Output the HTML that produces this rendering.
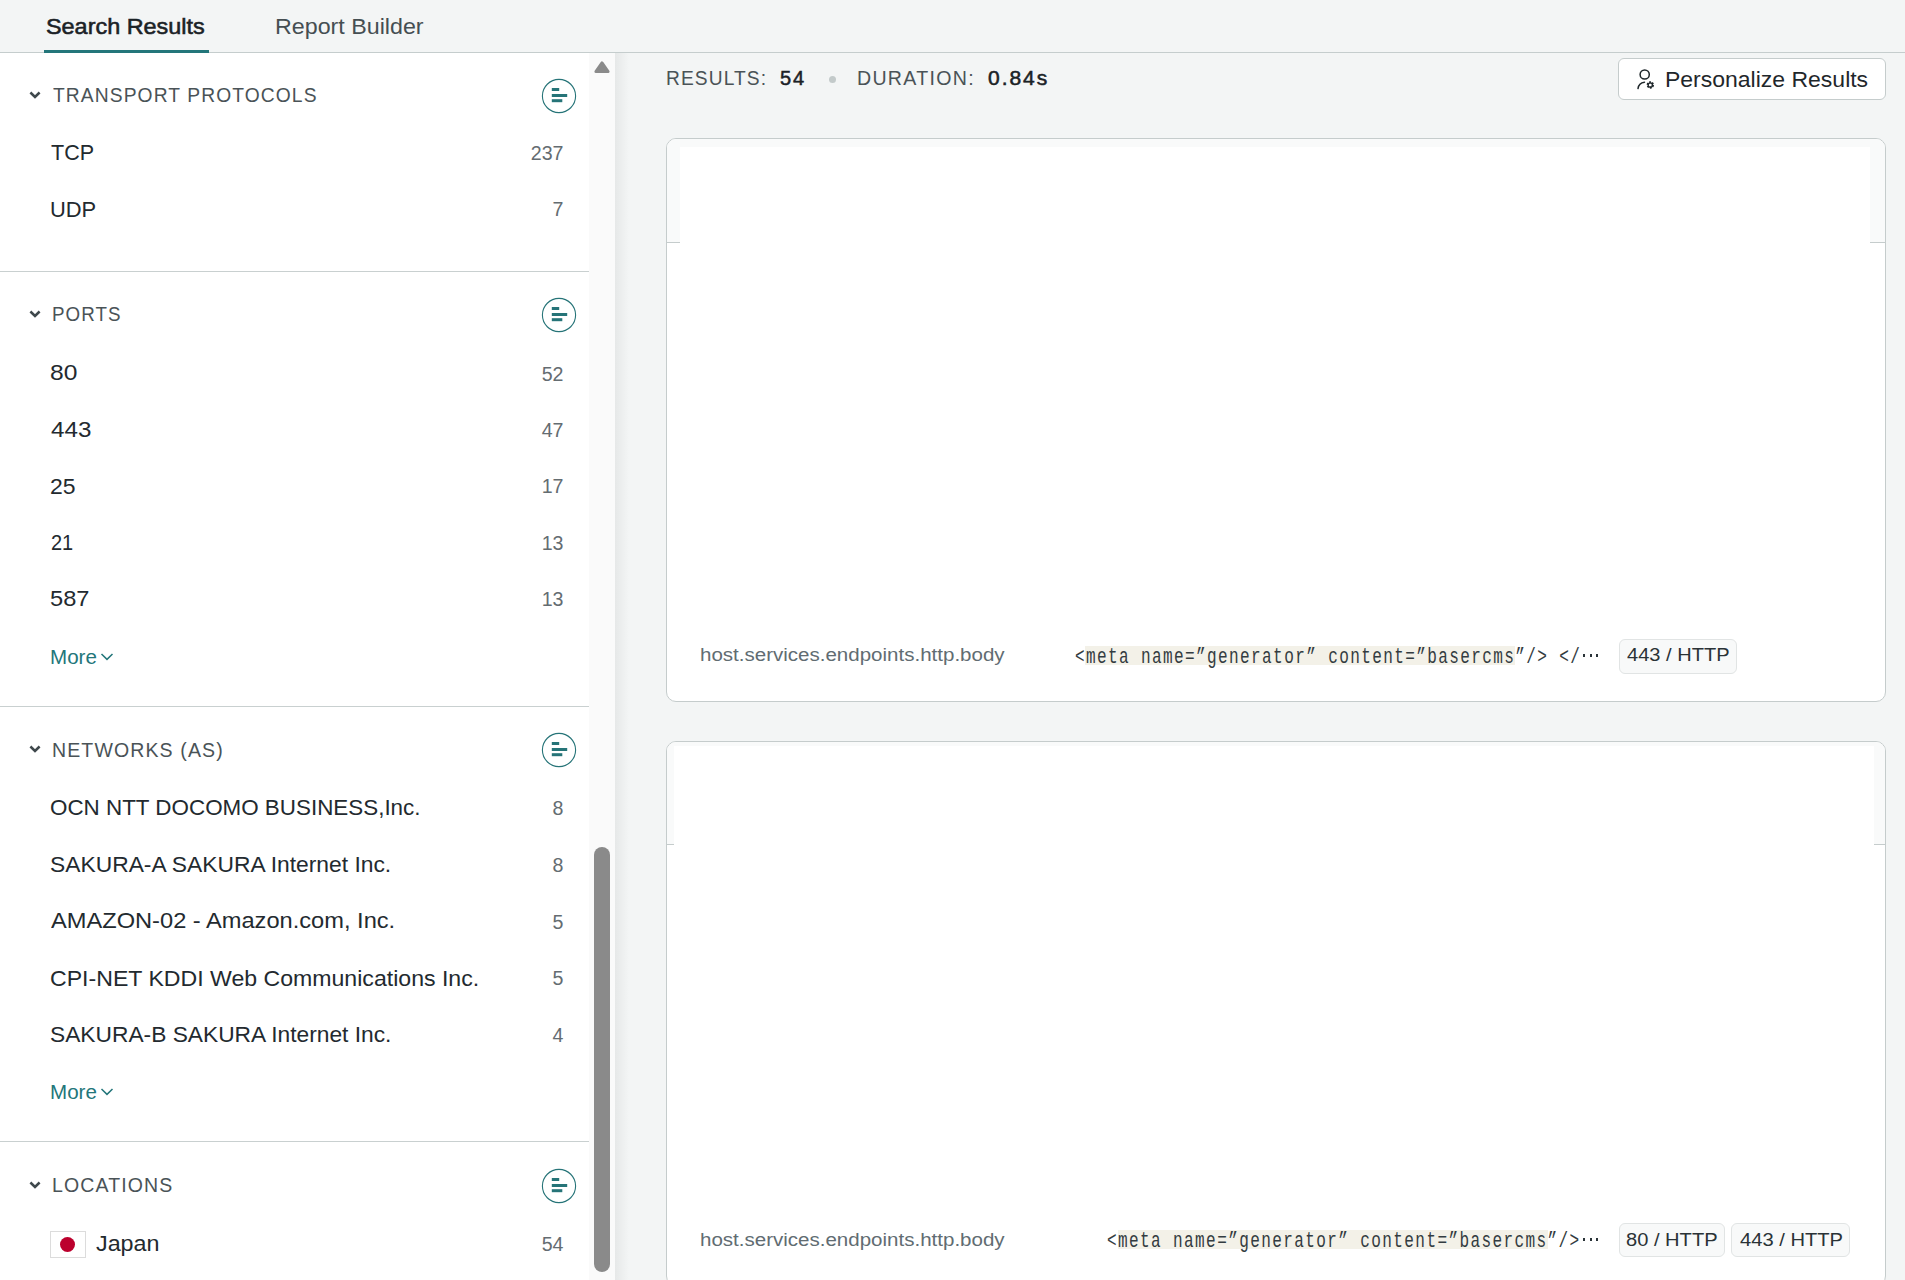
<!DOCTYPE html>
<html><head><meta charset="utf-8"><style>
html,body{margin:0;padding:0;}
body{width:1905px;height:1280px;overflow:hidden;position:relative;background:#f3f5f5;font-family:'Liberation Sans', sans-serif;}
.t{position:absolute;white-space:nowrap;}
.b{position:absolute;}
</style></head><body>
<div class="b" style="left:0px;top:0px;width:1905px;height:52px;background:#f3f5f5;"></div>
<div class="b" style="left:0px;top:52px;width:1905px;height:1px;background:#c5cdcd;"></div>
<div class="t" style="left:46.44px;top:16.09px;font-size:22.1px;line-height:22.1px;color:#1b2226;font-weight:400;letter-spacing:0px;font-family:'Liberation Sans', sans-serif;transform:scale(1.0591,1.0000);transform-origin:left 18.71px;-webkit-text-stroke:0.55px #1b2226;">Search Results</div>
<div class="t" style="left:274.70px;top:16.09px;font-size:22.1px;line-height:22.1px;color:#454e52;font-weight:400;letter-spacing:0px;font-family:'Liberation Sans', sans-serif;transform:scale(1.0518,1.0000);transform-origin:left 18.71px;">Report Builder</div>
<div class="b" style="left:44px;top:50px;width:165px;height:3px;background:#23767a;"></div>
<div class="b" style="left:0px;top:53px;width:589px;height:1227px;background:#ffffff;"></div>
<div class="b" style="left:589px;top:53px;width:26px;height:1227px;background:#fafafa;"></div>
<div class="b" style="left:615px;top:53px;width:14px;height:1227px;background:linear-gradient(to right,#e6e8e8,#f3f5f5);"></div>
<svg class="b" style="left:593px;top:60px;" width="18" height="14" viewBox="0 0 18 14"><path d="M9 2.9 L15.1 11.6 L2.9 11.6 Z" fill="#8a8a8a" stroke="#8a8a8a" stroke-width="3" stroke-linejoin="round"/></svg>
<div class="b" style="left:594px;top:847px;width:16px;height:425px;background:#8a8a8a;border-radius:8px;"></div>
<div class="t" style="left:52.60px;top:86.06px;font-size:19.3px;line-height:19.3px;color:#4a5357;font-weight:400;letter-spacing:1.1px;font-family:'Liberation Sans', sans-serif;transform:scale(0.9977,1.0000);transform-origin:left 16.34px;">TRANSPORT PROTOCOLS</div>
<svg class="b" style="left:28.5px;top:91.0px;" width="12" height="9" viewBox="0 0 12 9"><path d="M1.4 1.5 L6 6 L10.6 1.5" fill="none" stroke="#3f484c" stroke-width="2.5"/></svg>
<svg class="b" style="left:540.5px;top:77.5px;" width="36" height="36" viewBox="0 0 36 36"><circle cx="18" cy="18" r="16.6" fill="#fff" stroke="#267478" stroke-width="1.1"/><rect x="10.8" y="10" width="7.4" height="3" fill="#267478"/><rect x="10.8" y="16" width="15.4" height="3" fill="#267478"/><rect x="10.8" y="21.2" width="10.5" height="3" fill="#267478"/></svg>
<div class="t" style="left:51.25px;top:142.11px;font-size:22.2px;line-height:22.2px;color:#232a2f;font-weight:400;letter-spacing:0px;font-family:'Liberation Sans', sans-serif;transform:scale(0.9709,1.0000);transform-origin:left 18.79px;">TCP</div>
<div class="t" style="right:1341.50px;top:144.21px;font-size:19.6px;line-height:19.6px;color:#646c71;font-weight:400;letter-spacing:0px;font-family:'Liberation Sans', sans-serif;">237</div>
<div class="t" style="left:50.03px;top:198.91px;font-size:22.2px;line-height:22.2px;color:#232a2f;font-weight:400;letter-spacing:0px;font-family:'Liberation Sans', sans-serif;transform:scale(0.9864,1.0000);transform-origin:left 18.79px;">UDP</div>
<div class="t" style="right:1341.50px;top:200.11px;font-size:19.6px;line-height:19.6px;color:#646c71;font-weight:400;letter-spacing:0px;font-family:'Liberation Sans', sans-serif;">7</div>
<div class="b" style="left:0px;top:271px;width:589px;height:1px;background:#c9d0d0;"></div>
<div class="t" style="left:52.13px;top:304.56px;font-size:19.3px;line-height:19.3px;color:#4a5357;font-weight:400;letter-spacing:1.1px;font-family:'Liberation Sans', sans-serif;transform:scale(0.9725,1.0000);transform-origin:left 16.34px;">PORTS</div>
<svg class="b" style="left:28.5px;top:310.09999999999997px;" width="12" height="9" viewBox="0 0 12 9"><path d="M1.4 1.5 L6 6 L10.6 1.5" fill="none" stroke="#3f484c" stroke-width="2.5"/></svg>
<svg class="b" style="left:540.5px;top:296.59999999999997px;" width="36" height="36" viewBox="0 0 36 36"><circle cx="18" cy="18" r="16.6" fill="#fff" stroke="#267478" stroke-width="1.1"/><rect x="10.8" y="10" width="7.4" height="3" fill="#267478"/><rect x="10.8" y="16" width="15.4" height="3" fill="#267478"/><rect x="10.8" y="21.2" width="10.5" height="3" fill="#267478"/></svg>
<div class="t" style="left:50.29px;top:362.01px;font-size:22.2px;line-height:22.2px;color:#232a2f;font-weight:400;letter-spacing:0px;font-family:'Liberation Sans', sans-serif;transform:scale(1.1087,1.0000);transform-origin:left 18.79px;">80</div>
<div class="t" style="right:1341.50px;top:365.01px;font-size:19.6px;line-height:19.6px;color:#646c71;font-weight:400;letter-spacing:0px;font-family:'Liberation Sans', sans-serif;">52</div>
<div class="t" style="left:51.40px;top:419.11px;font-size:22.2px;line-height:22.2px;color:#232a2f;font-weight:400;letter-spacing:0px;font-family:'Liberation Sans', sans-serif;transform:scale(1.0917,1.0000);transform-origin:left 18.79px;">443</div>
<div class="t" style="right:1341.50px;top:420.71px;font-size:19.6px;line-height:19.6px;color:#646c71;font-weight:400;letter-spacing:0px;font-family:'Liberation Sans', sans-serif;">47</div>
<div class="t" style="left:50.37px;top:475.51px;font-size:22.2px;line-height:22.2px;color:#232a2f;font-weight:400;letter-spacing:0px;font-family:'Liberation Sans', sans-serif;transform:scale(1.0348,1.0000);transform-origin:left 18.79px;">25</div>
<div class="t" style="right:1341.50px;top:477.01px;font-size:19.6px;line-height:19.6px;color:#646c71;font-weight:400;letter-spacing:0px;font-family:'Liberation Sans', sans-serif;">17</div>
<div class="t" style="left:50.50px;top:531.81px;font-size:22.2px;line-height:22.2px;color:#232a2f;font-weight:400;letter-spacing:0px;font-family:'Liberation Sans', sans-serif;transform:scale(0.9000,1.0000);transform-origin:left 18.79px;">21</div>
<div class="t" style="right:1341.50px;top:533.91px;font-size:19.6px;line-height:19.6px;color:#646c71;font-weight:400;letter-spacing:0px;font-family:'Liberation Sans', sans-serif;">13</div>
<div class="t" style="left:50.33px;top:587.71px;font-size:22.2px;line-height:22.2px;color:#232a2f;font-weight:400;letter-spacing:0px;font-family:'Liberation Sans', sans-serif;transform:scale(1.0657,1.0000);transform-origin:left 18.79px;">587</div>
<div class="t" style="right:1341.50px;top:589.71px;font-size:19.6px;line-height:19.6px;color:#646c71;font-weight:400;letter-spacing:0px;font-family:'Liberation Sans', sans-serif;">13</div>
<div class="t" style="left:49.75px;top:648.29px;font-size:19.5px;line-height:19.5px;color:#23767a;font-weight:400;letter-spacing:0px;font-family:'Liberation Sans', sans-serif;transform:scale(1.0548,1.0000);transform-origin:left 16.51px;">More</div>
<svg class="b" style="left:100px;top:653px;" width="14" height="8" viewBox="0 0 14 8"><path d="M1.5 1 L7 6.4 L12.5 1" fill="none" stroke="#23767a" stroke-width="1.5"/></svg>
<div class="b" style="left:0px;top:706px;width:589px;height:1px;background:#c9d0d0;"></div>
<div class="t" style="left:51.89px;top:740.76px;font-size:19.3px;line-height:19.3px;color:#4a5357;font-weight:400;letter-spacing:1.1px;font-family:'Liberation Sans', sans-serif;transform:scale(1.0127,1.0000);transform-origin:left 16.34px;">NETWORKS (AS)</div>
<svg class="b" style="left:28.5px;top:745.2px;" width="12" height="9" viewBox="0 0 12 9"><path d="M1.4 1.5 L6 6 L10.6 1.5" fill="none" stroke="#3f484c" stroke-width="2.5"/></svg>
<svg class="b" style="left:540.5px;top:731.7px;" width="36" height="36" viewBox="0 0 36 36"><circle cx="18" cy="18" r="16.6" fill="#fff" stroke="#267478" stroke-width="1.1"/><rect x="10.8" y="10" width="7.4" height="3" fill="#267478"/><rect x="10.8" y="16" width="15.4" height="3" fill="#267478"/><rect x="10.8" y="21.2" width="10.5" height="3" fill="#267478"/></svg>
<div class="t" style="left:50.19px;top:797.01px;font-size:22.2px;line-height:22.2px;color:#232a2f;font-weight:400;letter-spacing:0px;font-family:'Liberation Sans', sans-serif;transform:scale(1.0096,1.0000);transform-origin:left 18.79px;">OCN NTT DOCOMO BUSINESS,Inc.</div>
<div class="t" style="right:1341.50px;top:799.01px;font-size:19.6px;line-height:19.6px;color:#646c71;font-weight:400;letter-spacing:0px;font-family:'Liberation Sans', sans-serif;">8</div>
<div class="t" style="left:50.17px;top:853.51px;font-size:22.2px;line-height:22.2px;color:#232a2f;font-weight:400;letter-spacing:0px;font-family:'Liberation Sans', sans-serif;transform:scale(1.0286,1.0000);transform-origin:left 18.79px;">SAKURA-A SAKURA Internet Inc.</div>
<div class="t" style="right:1341.50px;top:856.01px;font-size:19.6px;line-height:19.6px;color:#646c71;font-weight:400;letter-spacing:0px;font-family:'Liberation Sans', sans-serif;">8</div>
<div class="t" style="left:51.20px;top:910.01px;font-size:22.2px;line-height:22.2px;color:#232a2f;font-weight:400;letter-spacing:0px;font-family:'Liberation Sans', sans-serif;transform:scale(1.0654,1.0000);transform-origin:left 18.79px;">AMAZON-02 - Amazon.com, Inc.</div>
<div class="t" style="right:1341.50px;top:913.01px;font-size:19.6px;line-height:19.6px;color:#646c71;font-weight:400;letter-spacing:0px;font-family:'Liberation Sans', sans-serif;">5</div>
<div class="t" style="left:50.16px;top:967.51px;font-size:22.2px;line-height:22.2px;color:#232a2f;font-weight:400;letter-spacing:0px;font-family:'Liberation Sans', sans-serif;transform:scale(1.0411,1.0000);transform-origin:left 18.79px;">CPI-NET KDDI Web Communications Inc.</div>
<div class="t" style="right:1341.50px;top:969.01px;font-size:19.6px;line-height:19.6px;color:#646c71;font-weight:400;letter-spacing:0px;font-family:'Liberation Sans', sans-serif;">5</div>
<div class="t" style="left:50.17px;top:1024.01px;font-size:22.2px;line-height:22.2px;color:#232a2f;font-weight:400;letter-spacing:0px;font-family:'Liberation Sans', sans-serif;transform:scale(1.0255,1.0000);transform-origin:left 18.79px;">SAKURA-B SAKURA Internet Inc.</div>
<div class="t" style="right:1341.50px;top:1025.51px;font-size:19.6px;line-height:19.6px;color:#646c71;font-weight:400;letter-spacing:0px;font-family:'Liberation Sans', sans-serif;">4</div>
<div class="t" style="left:49.75px;top:1082.79px;font-size:19.5px;line-height:19.5px;color:#23767a;font-weight:400;letter-spacing:0px;font-family:'Liberation Sans', sans-serif;transform:scale(1.0548,1.0000);transform-origin:left 16.51px;">More</div>
<svg class="b" style="left:100px;top:1088.3px;" width="14" height="8" viewBox="0 0 14 8"><path d="M1.5 1 L7 6.4 L12.5 1" fill="none" stroke="#23767a" stroke-width="1.5"/></svg>
<div class="b" style="left:0px;top:1141px;width:589px;height:1px;background:#c9d0d0;"></div>
<div class="t" style="left:51.89px;top:1175.96px;font-size:19.3px;line-height:19.3px;color:#4a5357;font-weight:400;letter-spacing:1.1px;font-family:'Liberation Sans', sans-serif;transform:scale(1.0120,1.0000);transform-origin:left 16.34px;">LOCATIONS</div>
<svg class="b" style="left:28.5px;top:1181.1000000000001px;" width="12" height="9" viewBox="0 0 12 9"><path d="M1.4 1.5 L6 6 L10.6 1.5" fill="none" stroke="#3f484c" stroke-width="2.5"/></svg>
<svg class="b" style="left:540.5px;top:1167.6000000000001px;" width="36" height="36" viewBox="0 0 36 36"><circle cx="18" cy="18" r="16.6" fill="#fff" stroke="#267478" stroke-width="1.1"/><rect x="10.8" y="10" width="7.4" height="3" fill="#267478"/><rect x="10.8" y="16" width="15.4" height="3" fill="#267478"/><rect x="10.8" y="21.2" width="10.5" height="3" fill="#267478"/></svg>
<div class="b" style="left:50px;top:1231px;width:36px;height:27px;box-sizing:border-box;border:1px solid #dcdcdc;background:#fff;"></div>
<div class="b" style="left:59.9px;top:1236.8px;width:15.2px;height:15.2px;border-radius:50%;background:#bc002d;"></div>
<div class="t" style="left:96.00px;top:1232.71px;font-size:22.2px;line-height:22.2px;color:#232a2f;font-weight:400;letter-spacing:0px;font-family:'Liberation Sans', sans-serif;transform:scale(1.0508,1.0000);transform-origin:left 18.79px;">Japan</div>
<div class="t" style="right:1341.50px;top:1235.41px;font-size:19.6px;line-height:19.6px;color:#646c71;font-weight:400;letter-spacing:0px;font-family:'Liberation Sans', sans-serif;">54</div>
<div class="t" style="left:666.12px;top:69.49px;font-size:19.5px;line-height:19.5px;color:#4a5357;font-weight:400;letter-spacing:1.1px;font-family:'Liberation Sans', sans-serif;transform:scale(0.9838,1.0000);transform-origin:left 16.51px;">RESULTS:</div>
<div class="t" style="left:780.20px;top:69.49px;font-size:19.5px;line-height:19.5px;color:#1b2226;font-weight:400;letter-spacing:1.8px;font-family:'Liberation Sans', sans-serif;transform:scale(1.0292,1.0000);transform-origin:left 16.51px;-webkit-text-stroke:0.5px #1b2226;">54</div>
<div class="b" style="left:829px;top:75.5px;width:7px;height:7px;border-radius:50%;background:#c3caca;"></div>
<div class="t" style="left:857.20px;top:69.49px;font-size:19.5px;line-height:19.5px;color:#4a5357;font-weight:400;letter-spacing:1.3px;font-family:'Liberation Sans', sans-serif;transform:scale(1.0035,1.0000);transform-origin:left 16.51px;">DURATION:</div>
<div class="t" style="left:987.60px;top:69.49px;font-size:19.5px;line-height:19.5px;color:#1b2226;font-weight:400;letter-spacing:1.8px;font-family:'Liberation Sans', sans-serif;transform:scale(1.0778,1.0000);transform-origin:left 16.51px;-webkit-text-stroke:0.5px #1b2226;">0.84s</div>
<div class="b" style="left:1618px;top:58px;width:268px;height:42px;box-sizing:border-box;border:1px solid #c5cccc;border-radius:6px;background:#fff;"></div>
<svg class="b" style="left:1634px;top:66px;" width="24" height="26" viewBox="0 0 24 26"><circle cx="10.7" cy="8.5" r="4.6" fill="none" stroke="#1f272b" stroke-width="1.5"/><path d="M4 22.6 C4.5 18.5 7 16.6 10.5 16.2" fill="none" stroke="#1f272b" stroke-width="1.5" stroke-linecap="round"/><circle cx="16.3" cy="19" r="2.6" fill="none" stroke="#1f272b" stroke-width="2.2" stroke-dasharray="1.6 1.12"/><circle cx="16.3" cy="19" r="2.2" fill="none" stroke="#1f272b" stroke-width="1.3"/></svg>
<div class="t" style="left:1665.14px;top:68.82px;font-size:22.3px;line-height:22.3px;color:#1f272b;font-weight:400;letter-spacing:0px;font-family:'Liberation Sans', sans-serif;transform:scale(1.0308,1.0000);transform-origin:left 18.88px;">Personalize Results</div>
<div class="b" style="left:666px;top:138px;width:1220px;height:564px;box-sizing:border-box;border:1px solid #c5cccc;border-radius:10px;background:#fff;overflow:hidden;"><div style="position:absolute;left:0;top:0;right:0;height:103px;background:#f9fafa;border-bottom:1px solid #c5cccc;"></div><div style="position:absolute;left:13px;top:8px;width:1190px;height:96px;background:#fff;"></div></div>
<div class="b" style="left:666px;top:741px;width:1220px;height:545px;box-sizing:border-box;border:1px solid #c5cccc;border-radius:10px;background:#fff;overflow:hidden;"><div style="position:absolute;left:0;top:0;right:0;height:102px;background:#f9fafa;border-bottom:1px solid #c5cccc;"></div><div style="position:absolute;left:7px;top:4px;width:1200px;height:99px;background:#fff;"></div></div>
<div class="t" style="left:699.73px;top:645.03px;font-size:19.1px;line-height:19.1px;color:#616c72;font-weight:400;letter-spacing:0px;font-family:'Liberation Sans', sans-serif;transform:scale(1.0748,1.0000);transform-origin:left 16.17px;">host.services.endpoints.http.body</div>
<div class="b" style="left:1085px;top:646px;width:430px;height:19px;background:#f3f1e8;"></div>
<div class="t" style="left:1074.60px;top:648.99px;font-size:18.67px;line-height:18.67px;color:#333c41;font-weight:400;letter-spacing:1.6px;font-family:'Liberation Mono', monospace;transform:scale(0.8602,1.1800);transform-origin:left 14.31px;">&lt;meta name=&#8221;generator&#8221; content=&#8221;basercms&#8221;/&gt; &lt;/</div>
<div class="b" style="left:1582.90px;top:654.40px;width:2.6px;height:2.6px;background:#2a3338;"></div>
<div class="b" style="left:1589.50px;top:654.40px;width:2.6px;height:2.6px;background:#2a3338;"></div>
<div class="b" style="left:1595.80px;top:654.40px;width:2.6px;height:2.6px;background:#2a3338;"></div>
<div class="b" style="left:1619px;top:639px;width:118px;height:35px;box-sizing:border-box;border:1px solid #e1e4e4;border-radius:6px;background:#f8f9f9;"></div>
<div class="t" style="left:1627.00px;top:646.10px;font-size:18.67px;line-height:18.67px;color:#2a3236;font-weight:400;letter-spacing:0px;font-family:'Liberation Sans', sans-serif;transform:scale(1.0747,1.0000);transform-origin:left 15.80px;">443 / HTTP</div>
<div class="t" style="left:699.83px;top:1229.93px;font-size:19.1px;line-height:19.1px;color:#616c72;font-weight:400;letter-spacing:0px;font-family:'Liberation Sans', sans-serif;transform:scale(1.0748,1.0000);transform-origin:left 16.17px;">host.services.endpoints.http.body</div>
<div class="b" style="left:1118px;top:1230px;width:430px;height:19px;background:#f3f1e8;"></div>
<div class="t" style="left:1107.04px;top:1232.59px;font-size:18.67px;line-height:18.67px;color:#333c41;font-weight:400;letter-spacing:1.6px;font-family:'Liberation Mono', monospace;transform:scale(0.8607,1.1800);transform-origin:left 14.31px;">&lt;meta name=&#8221;generator&#8221; content=&#8221;basercms&#8221;/&gt;</div>
<div class="b" style="left:1582.90px;top:1238.40px;width:2.6px;height:2.6px;background:#2a3338;"></div>
<div class="b" style="left:1589.50px;top:1238.40px;width:2.6px;height:2.6px;background:#2a3338;"></div>
<div class="b" style="left:1595.80px;top:1238.40px;width:2.6px;height:2.6px;background:#2a3338;"></div>
<div class="b" style="left:1619px;top:1223px;width:105.5px;height:34px;box-sizing:border-box;border:1px solid #e1e4e4;border-radius:6px;background:#f8f9f9;"></div>
<div class="t" style="left:1625.72px;top:1230.60px;font-size:18.67px;line-height:18.67px;color:#2a3236;font-weight:400;letter-spacing:0px;font-family:'Liberation Sans', sans-serif;transform:scale(1.0771,1.0000);transform-origin:left 15.80px;">80 / HTTP</div>
<div class="b" style="left:1731px;top:1223px;width:119px;height:34px;box-sizing:border-box;border:1px solid #e1e4e4;border-radius:6px;background:#f8f9f9;"></div>
<div class="t" style="left:1739.60px;top:1230.60px;font-size:18.67px;line-height:18.67px;color:#2a3236;font-weight:400;letter-spacing:0px;font-family:'Liberation Sans', sans-serif;transform:scale(1.0800,1.0000);transform-origin:left 15.80px;">443 / HTTP</div>
</body></html>
